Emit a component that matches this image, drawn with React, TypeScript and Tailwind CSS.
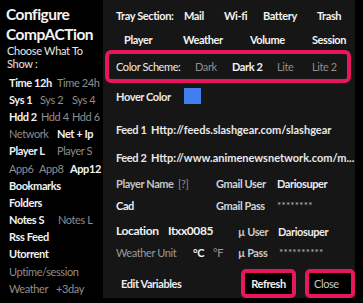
const font = { fontFamily: "Lato, 'Open Sans', sans-serif" };

const W = "text-[#f2f2f2] font-bold";
const G = "text-[#8e8e8e] font-normal";

function Row({ children }: { children: React.ReactNode }) {
  return (
    <div className="flex h-[17.2px] items-center pl-[3px] text-[11px] leading-none tracking-[-0.4px]">
      {children}
    </div>
  );
}

export default function App() {
  return (
    <div className="flex h-[303px] w-[363px] overflow-hidden bg-black" style={font}>
      {/* Left column */}
      <div className="w-[103px] shrink-0 bg-black pl-[6px] pt-[4px]">
        <div className="text-[15.5px] font-bold leading-[20px] tracking-[-0.5px] text-[#f4f4f4]">Configure</div>
        <div className="text-[15.5px] font-bold leading-[20px] tracking-[-0.5px] text-[#f4f4f4]">CompACTion</div>
        <div className="pl-[1px] text-[11px] leading-[13px] tracking-[-0.3px] text-[#e6e6e6]">Choose What To</div>
        <div className="pl-[1px] text-[11px] leading-[13px] tracking-[-0.3px] text-[#e6e6e6]">Show :</div>
        <div className="mt-[3.5px]">
          <Row>
            <span className={`w-[48px] ${W}`}>Time 12h</span>
            <span className={G}>Time 24h</span>
          </Row>
          <Row>
            <span className={`w-[31px] ${W}`}>Sys 1</span>
            <span className={`w-[32px] ${G}`}>Sys 2</span>
            <span className={G}>Sys 4</span>
          </Row>
          <Row>
            <span className={`w-[32px] ${W}`}>Hdd 2</span>
            <span className={`w-[31px] ${G}`}>Hdd 4</span>
            <span className={G}>Hdd 6</span>
          </Row>
          <Row>
            <span className={`w-[48px] ${G}`}>Network</span>
            <span className={W}>Net + Ip</span>
          </Row>
          <Row>
            <span className={`w-[48px] ${W}`}>Player L</span>
            <span className={G}>Player S</span>
          </Row>
          <Row>
            <span className={`w-[30px] ${G}`}>App6</span>
            <span className={`w-[31px] ${G}`}>App8</span>
            <span className={W}>App12</span>
          </Row>
          <Row>
            <span className={W}>Bookmarks</span>
          </Row>
          <Row>
            <span className={W}>Folders</span>
          </Row>
          <Row>
            <span className={`w-[49px] ${W}`}>Notes S</span>
            <span className={G}>Notes L</span>
          </Row>
          <Row>
            <span className={W}>Rss Feed</span>
          </Row>
          <Row>
            <span className={W}>Utorrent</span>
          </Row>
          <Row>
            <span className={G}>Uptime/session</span>
          </Row>
          <Row>
            <span className={`w-[47px] ${G}`}>Weather</span>
            <span className={G}>+3day</span>
          </Row>
        </div>
      </div>

      {/* Settings panel */}
      <div className="flex h-[298px] w-[252px] shrink-0 flex-col bg-[#161616] pt-[6px] text-[11px] leading-none tracking-[-0.4px]">
        {/* Tray section */}
        <div className="flex h-[20px] items-center pl-[13px] font-bold text-[#f2f2f2]">
          <span className="w-[68px]">Tray Section:</span>
          <span className="w-[40px]">Mail</span>
          <span className="w-[39px]">Wi-fi</span>
          <span className="w-[54px]">Battery</span>
          <span>Trash</span>
        </div>
        <div className="flex h-[24px] items-center pl-[21px] pt-[4px] font-bold text-[#f2f2f2]">
          <span className="w-[59px]">Player</span>
          <span className="w-[67px]">Weather</span>
          <span className="w-[62px]">Volume</span>
          <span>Session</span>
        </div>

        {/* Color scheme */}
        <div className="ml-[2px] flex h-[34px] w-[246px] items-center rounded-[6px] border-4 border-[#e6175c] pl-[7px]">
          <span className="w-[79px] text-[#ececec]">Color Scheme:</span>
          <span className={`w-[37px] ${G}`}>Dark</span>
          <span className={`w-[45px] ${W}`}>Dark 2</span>
          <span className={`w-[35px] ${G}`}>Lite</span>
          <span className={G}>Lite 2</span>
        </div>

        <div className="flex h-[26px] items-center pl-[13px]">
          <span className="w-[68px] font-bold text-[#e8e8e8]">Hover Color</span>
          <span className="h-[16px] w-[17px] bg-[#3f80ee]" />
        </div>

        {/* Feeds */}
        <div className="mt-[7px] flex h-[28px] items-center pl-[13px] font-bold text-[#e8e8e8]">
          <span className="w-[35px]">Feed 1</span>
          <span className="tracking-normal">Http://feeds.slashgear.com/slashgear</span>
        </div>
        <div className="flex h-[28px] items-center pl-[13px] font-bold text-[#e8e8e8]">
          <span className="w-[35px]">Feed 2</span>
          <span className="tracking-normal">Http://www.animenewsnetwork.com/m...</span>
        </div>

        {/* Accounts */}
        <div className="flex h-[26px] items-center pl-[13px]">
          <div className="flex w-[100px] items-center">
            <span className="w-[62px] font-bold text-[#c4c4c4]">Player Name</span>
            <span className="text-[#8e8e8e]">[?]</span>
          </div>
          <span className="w-[61px] font-bold text-[#d4d4d4]">Gmail User</span>
          <span className="font-bold text-[#ececec]">Dariosuper</span>
        </div>
        <div className="flex h-[17px] items-center pl-[13px]">
          <span className="w-[100px] font-bold text-[#ececec]">Cad</span>
          <span className="w-[61px] font-bold text-[#d4d4d4]">Gmail Pass</span>
          <span className="text-[10px] tracking-[0.2px] text-[#bdbdbd]">********</span>
        </div>
        <div className="mt-[9px] flex h-[18px] items-center pl-[13px]">
          <div className="flex w-[122px] items-center text-[12px] font-bold text-[#f0f0f0]">
            <span className="w-[52px]">Location</span>
            <span>Itxx0085</span>
          </div>
          <span className="w-[40px] font-bold text-[#c8c8c8]">µ User</span>
          <span className="font-bold text-[#ececec]">Dariosuper</span>
        </div>
        <div className="flex h-[24px] items-center pl-[13px]">
          <div className="flex w-[122px] items-center">
            <span className="w-[77px] text-[#9a9a9a]">Weather Unit</span>
            <span className="w-[20px] font-bold text-[#f2f2f2]">°C</span>
            <span className="text-[#9a9a9a]">°F</span>
          </div>
          <span className="w-[41px] font-bold text-[#c8c8c8]">µ Pass</span>
          <span className="text-[10px] tracking-[0.2px] text-[#bdbdbd]">**********</span>
        </div>

        {/* Actions */}
        <div className="mt-[5px] flex h-[29px] items-center pl-[18px]">
          <span className="w-[123px] font-bold text-[#ececec]">Edit Variables</span>
          <div className="flex h-[29px] w-[55px] shrink-0 items-center justify-center rounded-[5px] border-4 border-[#e6175c] bg-black font-bold text-[#f2f2f2]">
            Refresh
          </div>
          <div className="ml-[9px] flex h-[29px] w-[50px] shrink-0 items-center rounded-[5px] border-4 border-[#e6175c] bg-black pl-[5px] text-[#c8c8c8]">
            Close
          </div>
        </div>
      </div>
    </div>
  );
}
